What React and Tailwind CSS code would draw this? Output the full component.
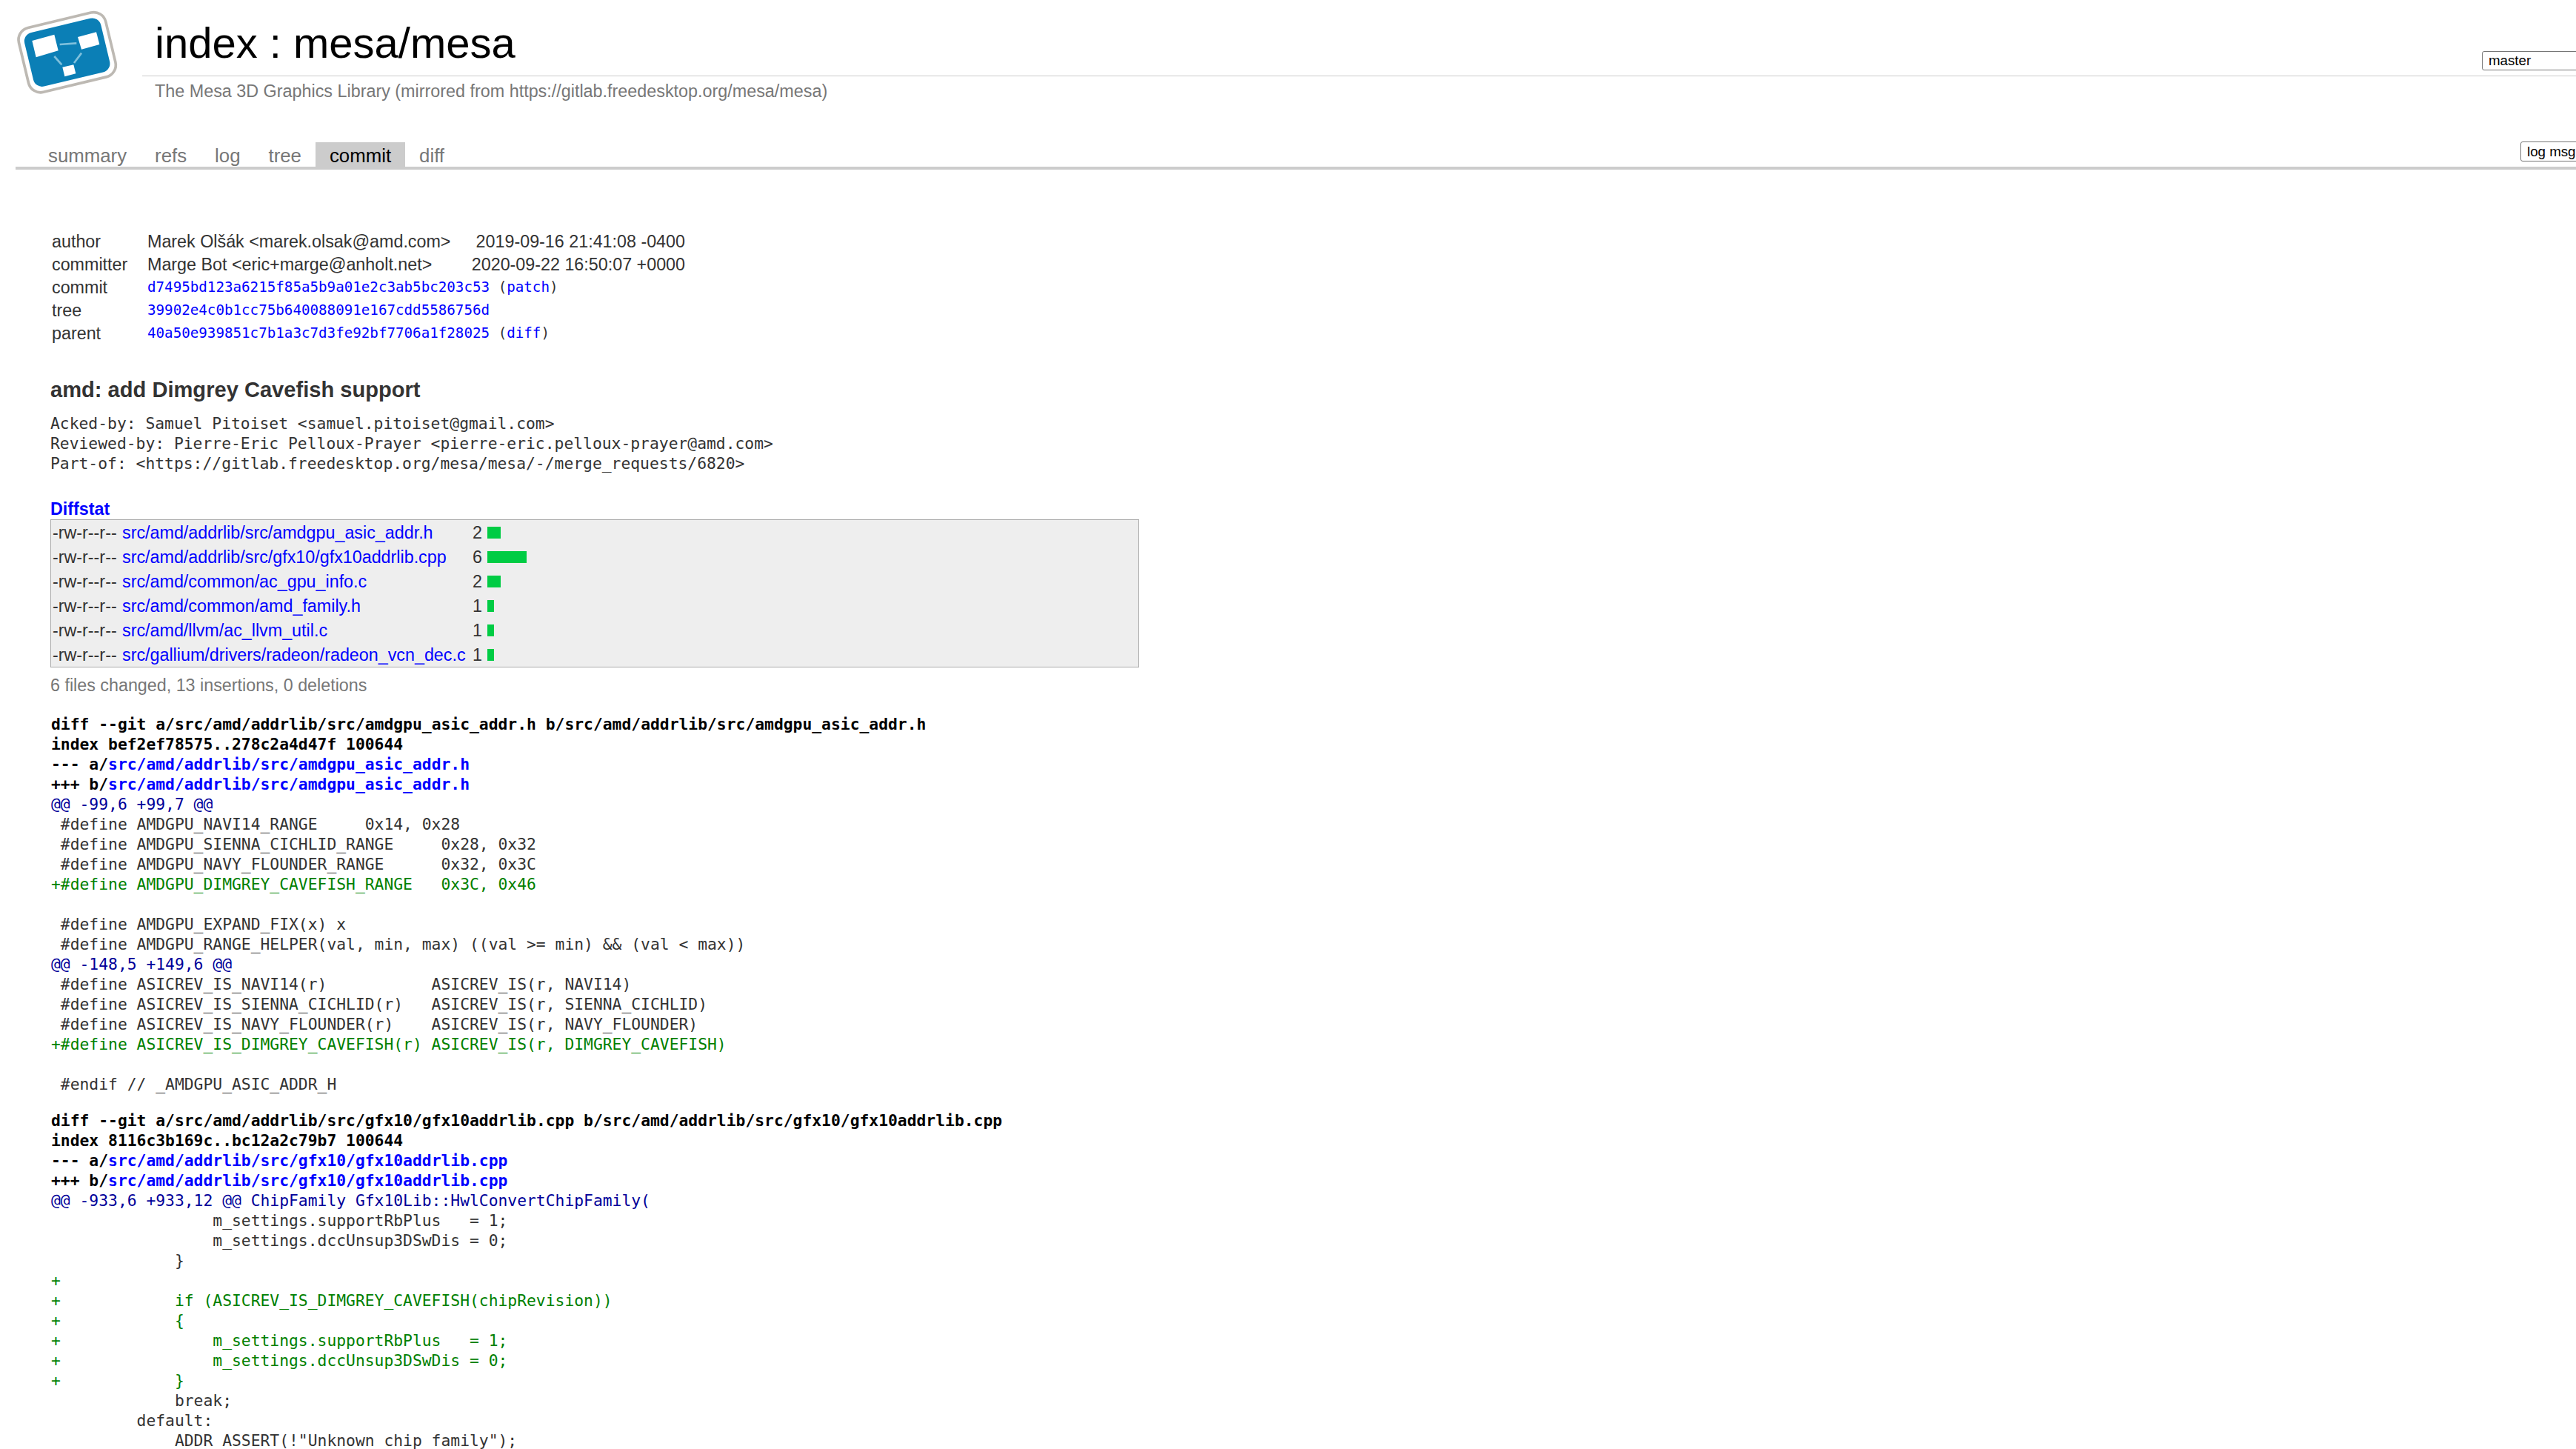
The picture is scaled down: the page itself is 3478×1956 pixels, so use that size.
import React from 'react';

const MONO = "font-['DejaVu_Sans_Mono',monospace]";

const tabs = [
  { name: 'summary' },
  { name: 'refs' },
  { name: 'log' },
  { name: 'tree' },
  { name: 'commit', active: true },
  { name: 'diff' },
];

const files = [
  { path: 'src/amd/addrlib/src/amdgpu_asic_addr.h', count: 2, bar: 'w-[18px]' },
  { path: 'src/amd/addrlib/src/gfx10/gfx10addrlib.cpp', count: 6, bar: 'w-[53px]' },
  { path: 'src/amd/common/ac_gpu_info.c', count: 2, bar: 'w-[18px]' },
  { path: 'src/amd/common/amd_family.h', count: 1, bar: 'w-[9px]' },
  { path: 'src/amd/llvm/ac_llvm_util.c', count: 1, bar: 'w-[9px]' },
  { path: 'src/gallium/drivers/radeon/radeon_vcn_dec.c', count: 1, bar: 'w-[9px]' },
];

const firstFile = 'src/amd/addrlib/src/amdgpu_asic_addr.h';
const secondFile = 'src/amd/addrlib/src/gfx10/gfx10addrlib.cpp';

const diffs = [
  {
    path: firstFile,
    index: 'index bef2ef78575..278c2a4d47f 100644',
    lines: [
      ['hunk', '@@ -99,6 +99,7 @@'],
      ['ctx', ' #define AMDGPU_NAVI14_RANGE     0x14, 0x28'],
      ['ctx', ' #define AMDGPU_SIENNA_CICHLID_RANGE     0x28, 0x32'],
      ['ctx', ' #define AMDGPU_NAVY_FLOUNDER_RANGE      0x32, 0x3C'],
      ['add', '+#define AMDGPU_DIMGREY_CAVEFISH_RANGE   0x3C, 0x46'],
      ['ctx', ' '],
      ['ctx', ' #define AMDGPU_EXPAND_FIX(x) x'],
      ['ctx', ' #define AMDGPU_RANGE_HELPER(val, min, max) ((val >= min) && (val < max))'],
      ['hunk', '@@ -148,5 +149,6 @@'],
      ['ctx', ' #define ASICREV_IS_NAVI14(r)           ASICREV_IS(r, NAVI14)'],
      ['ctx', ' #define ASICREV_IS_SIENNA_CICHLID(r)   ASICREV_IS(r, SIENNA_CICHLID)'],
      ['ctx', ' #define ASICREV_IS_NAVY_FLOUNDER(r)    ASICREV_IS(r, NAVY_FLOUNDER)'],
      ['add', '+#define ASICREV_IS_DIMGREY_CAVEFISH(r) ASICREV_IS(r, DIMGREY_CAVEFISH)'],
      ['ctx', ' '],
      ['ctx', ' #endif // _AMDGPU_ASIC_ADDR_H'],
    ],
  },
  {
    path: secondFile,
    index: 'index 8116c3b169c..bc12a2c79b7 100644',
    lines: [
      ['hunk', '@@ -933,6 +933,12 @@ ChipFamily Gfx10Lib::HwlConvertChipFamily('],
      ['ctx', '                 m_settings.supportRbPlus   = 1;'],
      ['ctx', '                 m_settings.dccUnsup3DSwDis = 0;'],
      ['ctx', '             }'],
      ['add', '+'],
      ['add', '+            if (ASICREV_IS_DIMGREY_CAVEFISH(chipRevision))'],
      ['add', '+            {'],
      ['add', '+                m_settings.supportRbPlus   = 1;'],
      ['add', '+                m_settings.dccUnsup3DSwDis = 0;'],
      ['add', '+            }'],
      ['ctx', '             break;'],
      ['ctx', '         default:'],
      ['ctx', '             ADDR_ASSERT(!"Unknown chip family");'],
    ],
  },
];

const lineColor = {
  hunk: 'text-[#000099]',
  ctx: 'text-[#333333]',
  add: 'text-[#008000]',
};

const Logo = () => (
  <svg viewBox="0 0 576 420" className="w-[192px] h-[140px] shrink-0">
    <g transform="rotate(-13.5 272 212)">
      <rect x="91" y="78" width="362" height="268" rx="50" fill="#fff" stroke="#bdb9b3" strokeWidth="11" />
      <rect x="113" y="100" width="318" height="224" rx="36" fill="#0b7fb6" />
    </g>
    <polygon points="130,165 220,140 236,205 146,232" fill="#fff" />
    <polygon points="315,150 390,130 403,180 330,200" fill="#fff" />
    <polygon points="253,272 298,262 307,298 262,310" fill="#fff" />
    <g stroke="#7fc0dc" strokeWidth="8">
      <line x1="242" y1="180" x2="310" y2="175" />
      <line x1="220" y1="228" x2="250" y2="262" />
      <line x1="330" y1="215" x2="300" y2="255" />
    </g>
  </svg>
);

const Header = () => (
  <div className="flex h-[192px]">
    <Logo />
    <div className="flex-1 min-w-0">
      <div className="relative h-[103px] border-b border-[#cccccc] pl-[17px]">
        <h1 className="text-[58px] leading-[68px] pt-[24px] text-black">index : mesa/mesa</h1>
        <div className="absolute left-[3159px] top-[69px] w-[200px] h-[26px] border border-[#767676] rounded-[3px] bg-white pl-[8px] text-[18.7px] leading-[24px] text-black">
          master
        </div>
      </div>
      <div className="pl-[17px] pt-[3px] text-[23.35px] leading-[34px] text-[#777777]">
        The Mesa 3D Graphics Library (mirrored from https://gitlab.freedesktop.org/mesa/mesa)
      </div>
    </div>
  </div>
);

const TabBar = () => (
  <div className="relative ml-[21px] flex h-[37px] border-b-4 border-[#cccccc] pl-[25px] text-[25.8px] leading-[30px]">
    {tabs.map((tab) => (
      <a
        key={tab.name}
        href="#"
        className={tab.active ? 'px-[19px] pt-[3px] bg-[#cccccc] text-black' : 'px-[19px] pt-[3px] text-[#777777]'}
      >
        {tab.name}
      </a>
    ))}
    <div className="absolute left-[3382px] top-[-1px] w-[120px] h-[27px] border border-[#767676] rounded-[3px] bg-white pl-[8px] text-[18.7px] leading-[25px] text-black">
      log msg
    </div>
  </div>
);

const CommitInfo = () => {
  const hashClass = `${MONO} text-[19.2px] text-[#0000ff]`;
  return (
    <table className="w-[857px] border-collapse">
      <tbody>
        <tr className="h-[31px]">
          <th className="w-[131px] pl-[2px] text-left font-normal">author</th>
          <td>Marek Olšák &lt;marek.olsak@amd.com&gt;</td>
          <td className="text-right">2019-09-16 21:41:08 -0400</td>
        </tr>
        <tr className="h-[31px]">
          <th className="pl-[2px] text-left font-normal">committer</th>
          <td>Marge Bot &lt;eric+marge@anholt.net&gt;</td>
          <td className="text-right">2020-09-22 16:50:07 +0000</td>
        </tr>
        <tr className="h-[31px]">
          <th className="pl-[2px] text-left font-normal">commit</th>
          <td colSpan={2} className={`${MONO} text-[19.2px] whitespace-pre`}>
            <a href="#" className={hashClass}>d7495bd123a6215f85a5b9a01e2c3ab5bc203c53</a>
            {' ('}
            <a href="#" className={hashClass}>patch</a>
            {')'}
          </td>
        </tr>
        <tr className="h-[31px]">
          <th className="pl-[2px] text-left font-normal">tree</th>
          <td colSpan={2} className={`${MONO} text-[19.2px]`}>
            <a href="#" className={hashClass}>39902e4c0b1cc75b640088091e167cdd5586756d</a>
          </td>
        </tr>
        <tr className="h-[31px]">
          <th className="pl-[2px] text-left font-normal">parent</th>
          <td colSpan={2} className={`${MONO} text-[19.2px] whitespace-pre`}>
            <a href="#" className={hashClass}>40a50e939851c7b1a3c7d3fe92bf7706a1f28025</a>
            {' ('}
            <a href="#" className={hashClass}>diff</a>
            {')'}
          </td>
        </tr>
      </tbody>
    </table>
  );
};

const Diffstat = () => (
  <div>
    <a href="#" className="block mt-[35px] h-[27px] font-bold text-[#0000ff] leading-[26px]">Diffstat</a>
    <div className="border border-[#aaaaaa] bg-[#eeeeee]">
      {files.map((file) => (
        <div key={file.path} className="flex h-[33px] items-center">
          <span className="w-[96px] pl-[2px] shrink-0">-rw-r--r--</span>
          <a href="#" className="w-[466px] shrink-0 text-[#0000ff]">{file.path}</a>
          <span className="w-[20px] shrink-0 text-right">{file.count}</span>
          <span className={`ml-[7px] h-[16px] bg-[#00cc44] ${file.bar}`} />
        </div>
      ))}
    </div>
    <div className="mt-[11px] leading-[26px] text-[#777777]">6 files changed, 13 insertions, 0 deletions</div>
  </div>
);

const DiffBlock = ({ diff }) => (
  <div className="mt-[22px] first:mt-0">
    <div className="font-bold text-black">
      <div>diff --git a/{diff.path} b/{diff.path}</div>
      <div>{diff.index}</div>
      <div>--- a/<a href="#" className="text-[#0000ff]">{diff.path}</a></div>
      <div>+++ b/<a href="#" className="text-[#0000ff]">{diff.path}</a></div>
    </div>
    {diff.lines.map(([kind, text], i) => (
      <div key={i} className={lineColor[kind]}>{text}</div>
    ))}
  </div>
);

export default function App() {
  return (
    <div className="h-[1956px] w-full overflow-hidden bg-white font-['Liberation_Sans',Arial,sans-serif] text-[23.3px] leading-[26px] text-[#333333]">
      <Header />
      <TabBar />
      <div className="pl-[68px] pt-[81px]">
        <CommitInfo />
        <h2 className="mt-[44px] mb-[15px] text-[29.1px] leading-[34px] font-bold">amd: add Dimgrey Cavefish support</h2>
        <div className={`${MONO} text-[21.33px] leading-[27px] whitespace-pre`}>
          <div>Acked-by: Samuel Pitoiset &lt;samuel.pitoiset@gmail.com&gt;</div>
          <div>Reviewed-by: Pierre-Eric Pelloux-Prayer &lt;pierre-eric.pelloux-prayer@amd.com&gt;</div>
          <div>Part-of: &lt;https://gitlab.freedesktop.org/mesa/mesa/-/merge_requests/6820&gt;</div>
        </div>
        <div className="w-[1470px]">
          <Diffstat />
        </div>
        <div className={`mt-[26px] pl-[1px] ${MONO} text-[21.33px] leading-[27px] whitespace-pre`}>
          {diffs.map((diff) => (
            <DiffBlock key={diff.path} diff={diff} />
          ))}
        </div>
      </div>
    </div>
  );
}
